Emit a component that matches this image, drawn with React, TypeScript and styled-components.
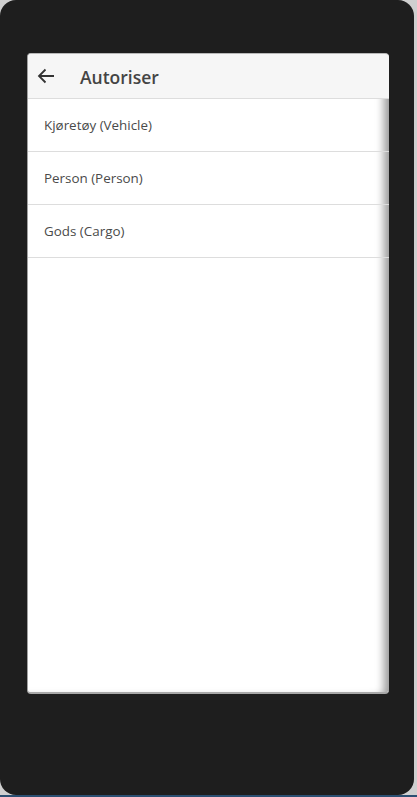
import * as React from 'react';
import styled, { createGlobalStyle } from 'styled-components';

const GlobalStyle = createGlobalStyle`
  html, body {
    margin: 0;
    padding: 0;
    background: #cfcfcf;
  }
`;

const Screen = styled('div')`
  width: 417px;
  height: 797px;
  display: flex;
  flex-direction: column;
  font-family: "Open Sans", "Noto Sans", sans-serif;
`;

const Frame = styled('div')`
  width: 414px;
  height: 795px;
  box-sizing: border-box;
  padding: 53px 25px 101px 27px;
  background-color: #1e1e1e;
  border-radius: 16px;
  display: flex;
`;

const Taskbar = styled('div')`
  height: 2px;
  background-color: #2b4f72;
`;

const Card = styled('section')`
  flex: 1;
  display: flex;
  flex-direction: column;
  background-color: #ffffff;
  border-radius: 4px;
  border-top: 1px solid #b8b8b8;
  border-left: 1px solid #a0a0a0;
  border-bottom: 2px solid #a8a8a8;
  box-shadow: inset -10px 0 8px -5px rgba(0, 0, 0, 0.4);
  overflow: hidden;
`;

const Header = styled('header')`
  height: 44px;
  display: flex;
  align-items: center;
  padding-left: 7px;
  background-color: #f6f6f6;
  border-bottom: 1px solid #dddddd;
`;

const BackButton = styled('button')`
  width: 22px;
  height: 22px;
  padding: 0;
  border: none;
  background: none;
  display: flex;
  align-items: center;
  justify-content: center;
  color: #333333;
`;

const Title = styled('h1')`
  margin: 1px 0 0 23px;
  font-size: 17.5px;
  font-weight: 600;
  color: #444444;
`;

const List = styled('ul')`
  margin: 0;
  padding: 0;
  list-style: none;
`;

const Row = styled('li')`
  height: 52px;
  display: flex;
  align-items: center;
  padding-left: 16px;
  border-bottom: 1px solid #dddddd;
  font-size: 13.4px;
  color: #4a4a4a;
`;

const items = ['Kjøretøy (Vehicle)', 'Person (Person)', 'Gods (Cargo)'];

const App = () => {
  return (
    <Screen>
      <GlobalStyle />
      <Frame>
        <Card>
          <Header>
            <BackButton aria-label="Tilbake">
              <svg width="18" height="18" viewBox="0 0 18 18" fill="none" stroke="currentColor" strokeWidth="1.8">
                <path d="M17 9H2" />
                <path d="M8.5 2.5L2 9l6.5 6.5" />
              </svg>
            </BackButton>
            <Title>Autoriser</Title>
          </Header>
          <List>
            {items.map((item) => (
              <Row key={item}>{item}</Row>
            ))}
          </List>
        </Card>
      </Frame>
      <Taskbar />
    </Screen>
  );
};

export default App;
